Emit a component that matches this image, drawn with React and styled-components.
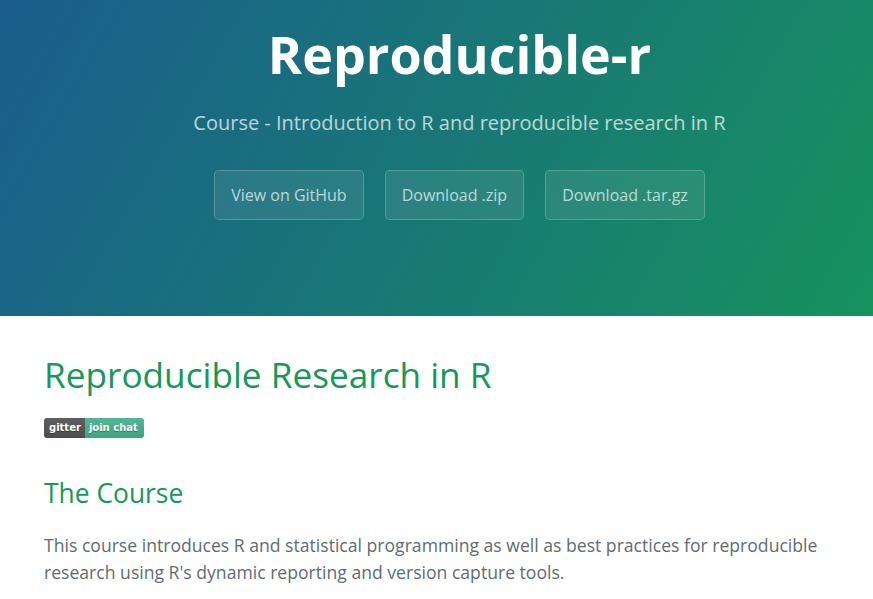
import React from "react";
import styled, { createGlobalStyle } from "styled-components";

const GlobalStyle = createGlobalStyle`
  html, body { margin: 0; padding: 0; background: #fff; }
  body {
    font-family: "Open Sans", "Helvetica Neue", Helvetica, Arial, sans-serif;
    font-size: 16px;
    line-height: 1.5;
    color: #606c71;
  }
  * { box-sizing: border-box; }
`;

const PageHeader = styled.header`
  color: #fff;
  text-align: center;
  background-color: #159957;
  background-image: linear-gradient(120deg, #1a5d8e, #17925e);
  padding: 15px 0 80px 46px;
`;

const ProjectName = styled.h1`
  margin: 0;
  font-size: 52px;
  line-height: 78px;
  font-weight: 700;
`;

const Tagline = styled.h2`
  margin: 15px 0 32px;
  font-size: 20px;
  line-height: 30px;
  font-weight: 400;
  opacity: 0.7;
`;

const ButtonRow = styled.div`
  display: flex;
  justify-content: center;
  gap: 21px;
  margin-bottom: 16px;
`;

const Btn = styled.a`
  display: inline-block;
  padding: 12px 16px;
  font-size: 16px;
  line-height: 24px;
  color: rgba(255, 255, 255, 0.7);
  text-decoration: none;
  background-color: rgba(255, 255, 255, 0.08);
  border: 1px solid rgba(255, 255, 255, 0.2);
  border-radius: 4.8px;
`;

const MainContent = styled.main`
  padding: 32px 44px;
  font-size: 17.6px;
  line-height: 1.5;
`;

const Title = styled.h1`
  margin: 0;
  font-size: 35.2px;
  line-height: 52.8px;
  font-weight: 400;
  color: #159957;
`;

const BadgeLine = styled.p`
  margin: 17px 0 0;
  display: flex;
`;

const Badge = styled.a`
  display: inline-flex;
  height: 20px;
  border-radius: 3px;
  overflow: hidden;
  text-decoration: none;
  font-family: "DejaVu Sans", Verdana, Geneva, sans-serif;
  font-size: 10px;
  font-weight: 700;
  line-height: 20px;
  color: #fff;
`;

const BadgePart = styled.span`
  display: block;
  padding: ${(p) => (p.$right ? "0 6px 0 4px" : "0 4px 0 5px")};
  background-color: ${(p) => p.$bg};
  background-image: linear-gradient(rgba(187, 187, 187, 0.1), rgba(0, 0, 0, 0.1));
  text-shadow: 0 1px 0 rgba(1, 1, 1, 0.3);
`;

const SubTitle = styled.h2`
  margin: 36px 0 19px;
  font-size: 26.4px;
  line-height: 39.6px;
  font-weight: 400;
  color: #159957;
`;

const Text = styled.p`
  margin: 0;
  color: #606c71;
`;

export default function App() {
  return (
    <>
      <GlobalStyle />
      <PageHeader>
        <ProjectName>Reproducible-r</ProjectName>
        <Tagline>Course - Introduction to R and reproducible research in R</Tagline>
        <ButtonRow>
          <Btn href="#">View on GitHub</Btn>
          <Btn href="#">Download .zip</Btn>
          <Btn href="#">Download .tar.gz</Btn>
        </ButtonRow>
      </PageHeader>
      <MainContent>
        <Title>Reproducible Research in R</Title>
        <BadgeLine>
          <Badge href="#">
            <BadgePart $bg="#555">gitter</BadgePart>
            <BadgePart $bg="#46b68f" $right>join chat</BadgePart>
          </Badge>
        </BadgeLine>
        <SubTitle>The Course</SubTitle>
        <Text>
          This course introduces R and statistical programming as well as best practices for reproducible
          research using R's dynamic reporting and version capture tools.
        </Text>
      </MainContent>
    </>
  );
}
